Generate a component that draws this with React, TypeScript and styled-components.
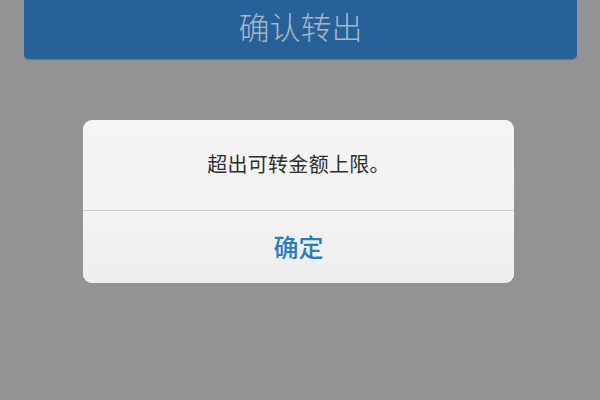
import React from "react";
import styled, { createGlobalStyle } from "styled-components";

const GlobalStyle = createGlobalStyle`
  html, body {
    margin: 0;
    padding: 0;
    background-color: #939395;
  }
  body {
    font-family: "Noto Sans CJK SC", "Noto Sans", sans-serif;
  }
`;

const Screen = styled.div`
  display: flex;
  flex-direction: column;
  width: 600px;
  height: 400px;
  overflow: hidden;
  background-color: #939395;
`;

const SubmitButton = styled.button`
  display: flex;
  align-items: center;
  justify-content: center;
  margin: 0 23px 0 24px;
  height: 59px;
  padding: 0 0 8px;
  border: none;
  border-radius: 0 0 5px 5px;
  background-color: #27619a;
  box-shadow: 0 1px 1px rgba(60, 90, 130, 0.5);
  color: #a9b6c7;
  font-family: "Noto Sans CJK SC", sans-serif;
  font-size: 31px;
  font-weight: 300;
  letter-spacing: 0;
`;

const Dialog = styled.div`
  display: flex;
  flex-direction: column;
  width: 431px;
  margin: 61px 0 0 83px;
  border-radius: 9px;
  overflow: hidden;
  background: linear-gradient(#f5f5f5, #f1f1f1);
`;

const Message = styled.div`
  display: flex;
  align-items: center;
  justify-content: center;
  height: 91px;
  padding-bottom: 4px;
  box-sizing: border-box;
  color: #2e2e2e;
  font-size: 20px;
  letter-spacing: 0.3px;
  border-bottom: 1px solid #cfcfcf;
`;

const Action = styled.button`
  display: flex;
  align-items: center;
  justify-content: center;
  height: 72px;
  padding: 0 0 2px;
  border: none;
  background: linear-gradient(#f3f3f3, #eeeeee);
  color: #2a7dbd;
  font-family: "Noto Sans CJK SC", sans-serif;
  font-size: 25px;
  font-weight: 500;
`;

export default function App() {
  return (
    <Screen>
      <GlobalStyle />
      <SubmitButton>确认转出</SubmitButton>
      <Dialog>
        <Message>超出可转金额上限。</Message>
        <Action>确定</Action>
      </Dialog>
    </Screen>
  );
}
